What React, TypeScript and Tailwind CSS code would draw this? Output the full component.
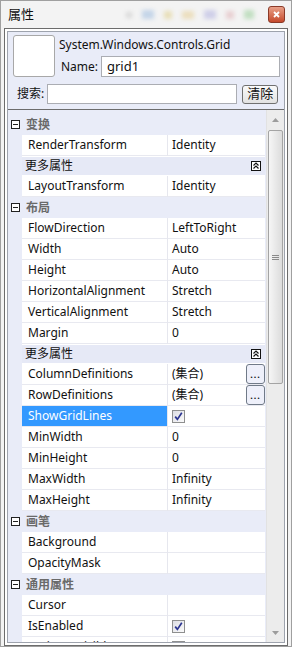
import React from "react"

type Row =
  | { kind: "cat"; label: string }
  | { kind: "more" }
  | { kind: "prop"; name: string; value?: string; check?: boolean; collection?: boolean; selected?: boolean }

const rows: Row[] = [
  { kind: "cat", label: "变换" },
  { kind: "prop", name: "RenderTransform", value: "Identity" },
  { kind: "more" },
  { kind: "prop", name: "LayoutTransform", value: "Identity" },
  { kind: "cat", label: "布局" },
  { kind: "prop", name: "FlowDirection", value: "LeftToRight" },
  { kind: "prop", name: "Width", value: "Auto" },
  { kind: "prop", name: "Height", value: "Auto" },
  { kind: "prop", name: "HorizontalAlignment", value: "Stretch" },
  { kind: "prop", name: "VerticalAlignment", value: "Stretch" },
  { kind: "prop", name: "Margin", value: "0" },
  { kind: "more" },
  { kind: "prop", name: "ColumnDefinitions", value: "(集合)", collection: true },
  { kind: "prop", name: "RowDefinitions", value: "(集合)", collection: true },
  { kind: "prop", name: "ShowGridLines", check: true, selected: true },
  { kind: "prop", name: "MinWidth", value: "0" },
  { kind: "prop", name: "MinHeight", value: "0" },
  { kind: "prop", name: "MaxWidth", value: "Infinity" },
  { kind: "prop", name: "MaxHeight", value: "Infinity" },
  { kind: "cat", label: "画笔" },
  { kind: "prop", name: "Background" },
  { kind: "prop", name: "OpacityMask" },
  { kind: "cat", label: "通用属性" },
  { kind: "prop", name: "Cursor" },
  { kind: "prop", name: "IsEnabled", check: true },
  { kind: "prop", name: "IsHitTestVisible", check: true },
]

const CheckBox = () => (
  <span className="w-[13px] h-[13px] border border-[#8e8f8f] bg-linear-to-br from-[#dcdde3] to-[#fbfbfb] flex items-center justify-center">
    <svg width="9" height="9" viewBox="0 0 9 9">
      <path d="M1.2 4.6 L3.4 7.4 L7.8 0.8" fill="none" stroke="#2c3591" strokeWidth="1.7" />
    </svg>
  </span>
)

const Collapse = () => (
  <svg width="9" height="9" viewBox="0 0 9 9" className="shrink-0">
    <rect x="0.5" y="0.5" width="8" height="8" fill="#fff" stroke="#222" />
    <path d="M2 4.5 H7" stroke="#222" />
  </svg>
)

const MoreIcon = () => (
  <svg width="10" height="10" viewBox="0 0 10 10">
    <rect x="0.5" y="0.5" width="9" height="9" fill="#fff" stroke="#111" />
    <path d="M2.5 4.5 L5 2 L7.5 4.5 M2.5 7.5 L5 5 L7.5 7.5" fill="none" stroke="#111" strokeWidth="1.2" />
  </svg>
)

const GridRow = ({ row }: { row: Row }) => {
  if (row.kind === "cat") {
    return (
      <div className="h-[21px] shrink-0 flex items-center pl-[3px] gap-[6px]">
        <Collapse />
        <span className="font-bold text-[#6a6a6a]">{row.label}</span>
      </div>
    )
  }
  if (row.kind === "more") {
    return (
      <div className="h-[20px] shrink-0 flex">
        <div className="w-[14px]" />
        <div className="w-[243px] flex items-center justify-between pl-[3px] pr-[4px] bg-[#e6e9f6] border-y border-white">
          <span>更多属性</span>
          <MoreIcon />
        </div>
      </div>
    )
  }
  return (
    <div className="h-[21px] shrink-0 flex">
      <div className="w-[14px]" />
      <div
        className={`w-[145px] flex items-center pl-[6px] border-b border-[#e8e9f0] whitespace-nowrap ${
          row.selected ? "bg-[#3399ff] text-white" : "bg-white"
        }`}
      >
        {row.name}
      </div>
      <div className="w-px bg-[#e6e7ee]" />
      <div className="w-[97px] flex items-center pl-[4px] bg-white border-b border-[#e8e9f0]">
        {row.check ? <CheckBox /> : <span>{row.value}</span>}
        {row.collection && (
          <span className="ml-auto h-[20px] w-[19px] rounded-[3px] border border-[#707a88] bg-[#eef0fa] flex items-end justify-center pb-[4px] text-[9px] leading-none font-bold tracking-[1px]">
            ...
          </span>
        )}
      </div>
    </div>
  )
}

const Arrow = ({ up }: { up?: boolean }) => (
  <svg width="7" height="4" viewBox="0 0 7 4">
    <path d={up ? "M0 4 L3.5 0 L7 4 Z" : "M0 0 L3.5 4 L7 0 Z"} fill="#9c9c9c" />
  </svg>
)

export default function App() {
  return (
    <div
      className="w-[292px] h-[647px] bg-[#f3f3f3] border border-[#9f9f9f] flex flex-col text-[12px] text-[#111] overflow-hidden"
      style={{ fontFamily: '"Noto Sans", "Noto Sans CJK SC", sans-serif' }}
    >
      {/* title bar */}
      <div className="h-[27px] shrink-0 flex items-center pl-[7px] pr-[6px]">
        <span className="text-[13px] shrink-0 whitespace-nowrap">属性</span>
        <div className="flex items-center ml-[92px] gap-[10px] opacity-40 blur-[2px]">
          <span className="w-[6px] h-[6px] bg-[#b0b0b0]" />
          <span className="w-[12px] h-[9px] bg-[#7fa8d8]" />
          <span className="w-[8px] h-[8px] bg-[#d8c060]" />
          <span className="w-[12px] h-[8px] bg-[#e0c070]" />
          <span className="w-[12px] h-[9px] bg-[#9a9ad8]" />
          <span className="w-[8px] h-[8px] bg-[#d89aa0]" />
          <span className="w-[10px] h-[9px] bg-[#78c078]" />
        </div>
        <div className="ml-auto shrink-0 w-[17px] h-[17px] rounded-[3px] border border-[#8a3a28] bg-linear-to-b from-[#e8a088] to-[#c4482a] flex items-center justify-center">
          <svg width="7" height="7" viewBox="0 0 7 7">
            <path d="M1 1 L6 6 M6 1 L1 6" stroke="#fff" strokeWidth="1.8" />
          </svg>
        </div>
      </div>

      {/* panel */}
      <div className="flex-1 min-h-0 ml-[3px] mr-[3px] border border-[#6c6c6c] bg-white p-[2px] flex">
        <div className="flex-1 min-w-0 flex flex-col border border-[#9ea3ad] bg-[#e9ecf8]">
          {/* header */}
          <div className="h-[77px] shrink-0 flex flex-col pt-[3px] pl-[5px] pr-[4px]">
            <div className="flex">
              <div className="w-[42px] h-[42px] rounded-[3px] border border-[#a8a8a8] bg-white" />
              <div className="flex flex-col ml-[4px] flex-1">
                <div className="h-[20px] flex items-center">System.Windows.Controls.Grid</div>
                <div className="flex items-center mt-px">
                  <span className="ml-[2px]">Name:</span>
                  <div className="ml-auto w-[179px] h-[21px] border border-[#abadb3] bg-white flex items-center pl-[5px] text-[13px]">
                    grid1
                  </div>
                </div>
              </div>
            </div>
            <div className="flex items-center mt-[7px] pl-[4px]">
              <span>搜索:</span>
              <div className="ml-[3px] w-[190px] h-[20px] border border-[#abadb3] bg-white" />
              <div className="ml-[5px] w-[36px] h-[19px] rounded-[3px] border border-[#707070] bg-linear-to-b from-[#fafafa] to-[#e2e2e2] flex items-center justify-center text-[13px]">
                清除
              </div>
            </div>
          </div>

          {/* grid */}
          <div className="flex-1 min-h-0 flex border-t border-[#6c6c6c]">
            <div className="flex-1 min-w-0 flex flex-col pt-[4px] overflow-hidden">
              {rows.map((r, i) => (
                <GridRow key={i} row={r} />
              ))}
            </div>
            <div className="w-[18px] shrink-0 bg-[#ececec] border-l border-[#e2e2e2] flex flex-col items-center">
              <div className="h-[20px] flex items-center justify-center">
                <Arrow up />
              </div>
              <div className="w-[15px] h-[254px] rounded-[2px] border border-[#a4a4a4] bg-linear-to-r from-[#f6f6f6] to-[#dcdcdc] flex flex-col items-center justify-center gap-[1px]">
                <span className="w-[7px] h-px bg-[#8a8a8a]" />
                <span className="w-[7px] h-px bg-[#8a8a8a]" />
                <span className="w-[7px] h-px bg-[#8a8a8a]" />
              </div>
              <div className="flex-1" />
              <div className="h-[18px] flex items-center justify-center">
                <Arrow />
              </div>
            </div>
          </div>
        </div>
      </div>
    </div>
  )
}
